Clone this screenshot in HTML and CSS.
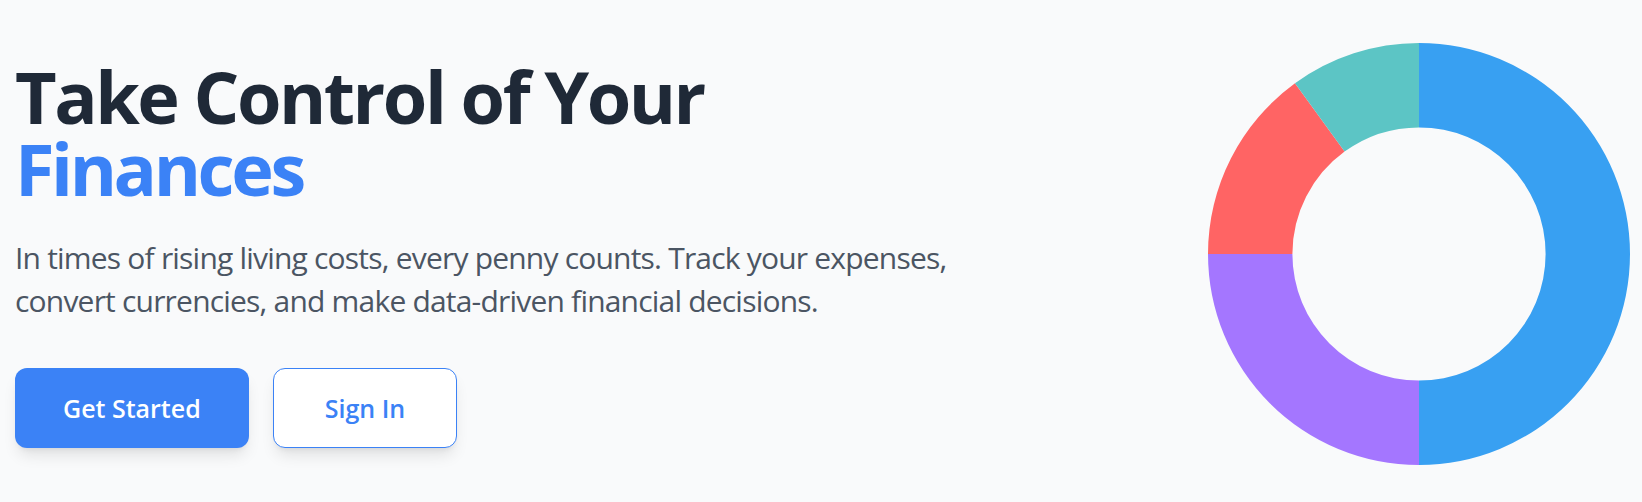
FILE: index.html
```html
<!DOCTYPE html>
<html lang="en">
<head>
<meta charset="utf-8">
<title>Take Control of Your Finances</title>
<link rel="stylesheet" href="styles.css">
</head>
<body>
<section class="hero">
  <div class="hero-text">
    <h1 class="hero-title">Take Control of Your<br><span class="accent">Finances</span></h1>
    <p class="hero-lead">In times of rising living costs, every penny counts. Track your expenses,<br>convert currencies, and make data-driven financial decisions.</p>
    <div class="hero-actions">
      <a class="btn btn-primary" href="#">Get Started</a>
      <a class="btn btn-outline" href="#">Sign In</a>
    </div>
  </div>
  <div class="hero-chart">
    <svg class="donut" viewBox="0 0 422 422" width="422" height="422" aria-hidden="true">
      <path fill="#38a0f2" d="M211 0 A211 211 0 0 1 422 211 A211 211 0 0 1 211 422 L211 337.6 A126.6 126.6 0 0 0 337.6 211 A126.6 126.6 0 0 0 211 84.4 Z"/>
      <path fill="#a476ff" d="M211 422 A211 211 0 0 1 0 211 L84.4 211 A126.6 126.6 0 0 0 211 337.6 Z"/>
      <path fill="#ff6464" d="M0 211 A211 211 0 0 1 86.98 40.3 L136.58 108.58 A126.6 126.6 0 0 0 84.4 211 Z"/>
      <path fill="#5cc5c5" d="M86.98 40.3 A211 211 0 0 1 211 0 L211 84.4 A126.6 126.6 0 0 0 136.58 108.58 Z"/>
    </svg>
  </div>
</section>
</body>
</html>
```

FILE: styles.css
```css
* { box-sizing: border-box; }
html, body { margin: 0; padding: 0; }
body {
  background: #f9fafb;
  font-family: "Open Sans", "Noto Sans", sans-serif;
  color: #1f2937;
}
.hero {
  height: 502px;
  padding: 5px 12px 0 15px;
  display: flex;
  align-items: center;
  justify-content: space-between;
}
.hero-text {
  display: flex;
  flex-direction: column;
  align-items: flex-start;
}
.hero-title {
  margin: 0;
  font-size: 72px;
  line-height: 72px;
  font-weight: 700;
  letter-spacing: -2.5px;
  color: #1f2937;
}
.accent {
  color: #3b82f6;
  letter-spacing: -3.4px;
}
.hero-lead {
  margin: 32px 0 0;
  font-size: 30px;
  line-height: 43px;
  letter-spacing: -0.8px;
  color: #4b5563;
}
.hero-actions {
  margin-top: 46px;
  display: flex;
  gap: 24px;
}
.btn {
  display: inline-block;
  height: 80px;
  padding: 0 48px;
  border-radius: 12px;
  font-size: 25px;
  font-weight: 600;
  line-height: 80px;
  text-decoration: none;
  box-shadow: 0 10px 15px -3px rgba(0,0,0,0.1), 0 4px 6px -4px rgba(0,0,0,0.1);
}
.btn-primary {
  background: #3b82f6;
  color: #ffffff;
}
.btn-outline {
  background: #ffffff;
  color: #3b82f6;
  border: 1px solid #3b82f6;
  line-height: 78px;
  padding: 0 51px;
}
.hero-chart {
  display: flex;
}
.donut { display: block; }
```
